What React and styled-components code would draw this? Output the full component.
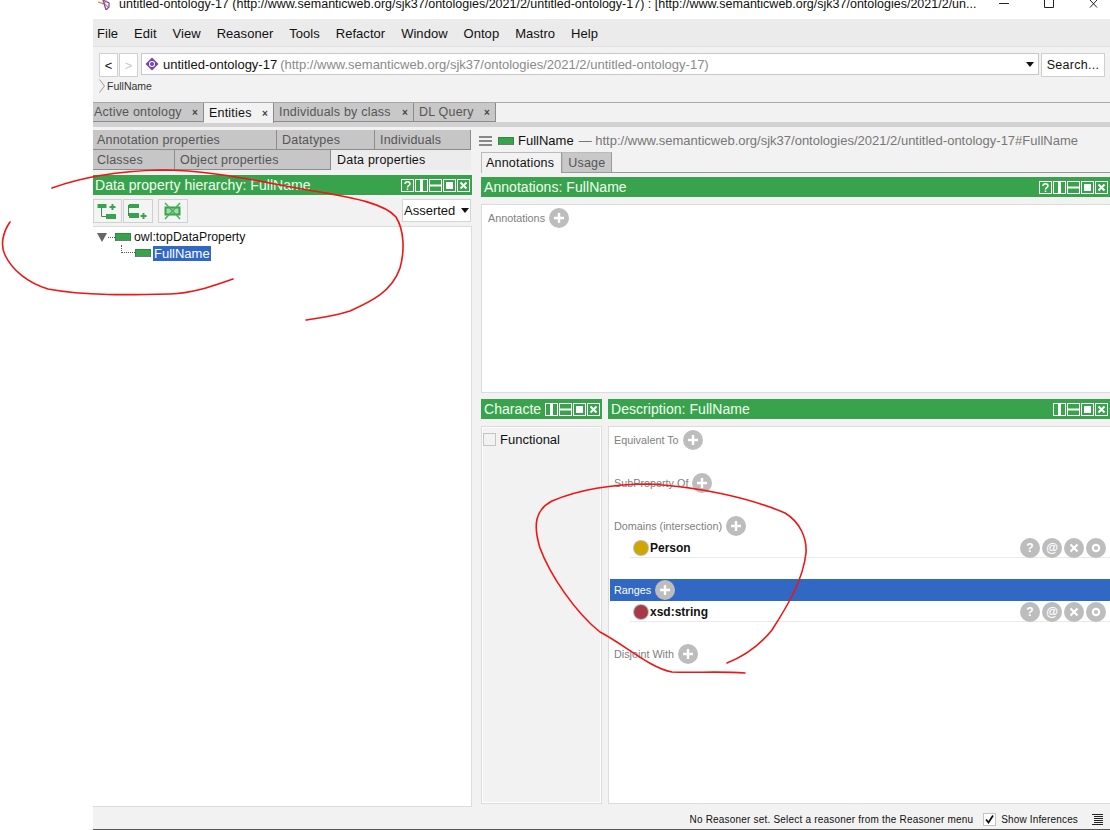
import React from 'react';
import styled, { createGlobalStyle } from 'styled-components';

const GlobalStyle = createGlobalStyle`
  html, body { margin: 0; padding: 0; background: #fff; }
  * { box-sizing: border-box; }
`;

const GREEN = '#38a34c';
const BLUE = '#3068c4';

const Page = styled.div`
  position: relative;
  width: 1110px;
  height: 830px;
  overflow: hidden;
  background: #fff;
  padding-left: 93px;
  font-family: "Liberation Sans", Arial, sans-serif;
  color: #111;
`;

const Frame = styled.div`
  display: flex;
  flex-direction: column;
  height: 830px;
`;

const TitleBar = styled.div`
  height: 19px;
  flex: none;
  display: flex;
  align-items: flex-start;
  padding-left: 5px;
  background: #fff;
  font-size: 12.5px;
  line-height: 8px;
`;

const TitleText = styled.span`
  margin-left: 8px;
  width: 858px;
  white-space: nowrap;
  overflow: visible;
`;

const WindowButtons = styled.div`
  display: flex;
  margin-left: 21px;
  gap: 33px;
`;

const MenuBar = styled.div`
  height: 28px;
  flex: none;
  display: flex;
  align-items: center;
  gap: 16px;
  padding: 1px 0 0 4px;
  background: #ebebeb;
  border-bottom: 1px solid #e0e0e0;
  font-size: 13px;
  letter-spacing: 0.03px;
`;

const Toolbar = styled.div`
  height: 55px;
  flex: none;
  padding: 6px 5px 0 6px;
  background: #f2f2f2;
`;

const NavRow = styled.div`
  display: flex;
  align-items: flex-start;
`;

const NavButton = styled.div`
  width: 19px;
  height: 24px;
  margin-right: 1px;
  display: flex;
  align-items: center;
  justify-content: center;
  background: #fff;
  border: 1px solid #d0d0d0;
  font-size: 13px;
  color: ${(p) => (p.$off ? '#c8c8c8' : '#111')};
`;

const Combo = styled.div`
  width: 899px;
  height: 22px;
  margin: 0 2px;
  padding: 0 4px 0 3px;
  display: flex;
  align-items: center;
  background: #fff;
  border: 1px solid #c8c8c8;
  font-size: 13px;
`;

const ComboName = styled.span`
  margin-left: 4px;
  white-space: nowrap;
`;

const ComboIri = styled.span`
  margin-left: 3px;
  color: #8a8a8a;
  white-space: nowrap;
`;

const Caret = styled.span`
  margin-left: auto;
  width: 0;
  height: 0;
  border-left: 4px solid transparent;
  border-right: 4px solid transparent;
  border-top: 5px solid #111;
`;

const SearchButton = styled.div`
  width: 64px;
  height: 24px;
  display: flex;
  align-items: center;
  justify-content: center;
  background: #fff;
  border: 1px solid #cfcfcf;
  font-size: 12.5px;
  letter-spacing: 0.3px;
`;

const Crumb = styled.div`
  display: flex;
  align-items: center;
  gap: 2px;
  height: 14px;
  margin-top: 2px;
  font-size: 10.5px;
  color: #333;
`;

const MainTabs = styled.div`
  flex: none;
  height: 25px;
  display: flex;
  align-items: flex-start;
  background: #f2f2f2;
  border-top: 1px solid #a8a8a8;
  box-shadow: inset 0 -5px 0 #d2d2d2;
`;

const MainTab = styled.div`
  height: ${(p) => (p.$on ? 20 : 19)}px;
  width: ${(p) => p.$w}px;
  flex: none;
  display: flex;
  align-items: center;
  justify-content: space-between;
  padding: 0 5px 0 ${(p) => (p.$first ? 1 : 5)}px;
  background: ${(p) => (p.$on ? '#f2f2f2' : '#c8c8c8')};
  border-right: 1px solid #8c8c8c;
  border-bottom: ${(p) => (p.$on ? 'none' : '1px solid #8c8c8c')};
  font-size: 12.5px;
  letter-spacing: 0.2px;
  color: ${(p) => (p.$on ? '#111' : '#555')};
`;

const TabClose = styled.span`
  font-size: 10px;
  font-weight: bold;
  color: #444;
`;

const Workspace = styled.div`
  flex: 1;
  min-height: 0;
  display: grid;
  grid-template-columns: 379px 1fr;
  column-gap: 9px;
  background: #f2f2f2;
`;

const LeftColumn = styled.div`
  display: flex;
  flex-direction: column;
  padding-top: 3px;
  min-height: 0;
`;

const SubTabRow = styled.div`
  display: flex;
  height: ${(p) => p.$h}px;
  flex: none;
  margin-bottom: ${(p) => p.$after || 0}px;
`;

const SubTab = styled.div`
  width: ${(p) => p.$w}px;
  flex: none;
  display: flex;
  align-items: center;
  padding-left: ${(p) => (p.$on ? 6 : p.$first ? 4 : 5)}px;
  background: ${(p) => (p.$on ? '#ececec' : '#c6c6c6')};
  border-right: ${(p) => (p.$on ? 'none' : '1px solid #8c8c8c')};
  border-bottom: ${(p) => (p.$on ? 'none' : '1px solid #8c8c8c')};
  font-size: 12.5px;
  letter-spacing: 0.2px;
  color: ${(p) => (p.$on ? '#111' : '#555')};
`;

const GreenBar = styled.div`
  flex: none;
  height: 20px;
  display: flex;
  align-items: center;
  justify-content: space-between;
  padding: 0 2px 0 ${(p) => (p.$tight ? 2 : 3)}px;
  background: ${GREEN};
  color: #f2fff2;
  font-size: 14px;
  letter-spacing: 0.05px;
  white-space: nowrap;
  overflow: hidden;
`;

const ViewIcons = styled.div`
  display: flex;
  flex: none;
  gap: 1px;
`;

const HierarchyTools = styled.div`
  flex: none;
  height: 31px;
  display: flex;
  align-items: flex-start;
  padding-top: 4px;
`;

const ToolButton = styled.div`
  width: ${(p) => p.$w}px;
  height: 24px;
  margin-right: ${(p) => p.$gap}px;
  display: flex;
  align-items: center;
  justify-content: center;
  background: #f4f4f4;
  border: 1px solid #d0d0d0;
`;

const AssertedSelect = styled.div`
  margin-left: auto;
  width: 69px;
  height: 23px;
  margin-right: 1px;
  display: flex;
  align-items: center;
  justify-content: space-between;
  padding: 0 1px 0 1px;
  background: #fff;
  border: 1px solid #d4d4d4;
  font-size: 13px;
`;

const TreeBox = styled.div`
  width: 379px;
  height: 581px;
  flex: none;
  padding: 2px 0 0 4px;
  background: #fff;
  border-top: 1px solid #dcdcdc;
  border-right: 1px solid #dcdcdc;
  border-bottom: 1px solid #dcdcdc;
  font-size: 12.3px;
`;

const TreeRow = styled.div`
  height: 16px;
  display: flex;
  align-items: center;
  padding-left: ${(p) => p.$indent}px;
`;

const Triangle = styled.span`
  width: 0;
  height: 0;
  margin-right: 1px;
  border-left: 5px solid transparent;
  border-right: 5px solid transparent;
  border-top: 9px solid #666;
`;

const DotsH = styled.span`
  width: ${(p) => p.$w}px;
  border-top: 1px dotted #555;
`;

const DotsL = styled.span`
  width: 14px;
  height: 8px;
  margin-top: -8px;
  border-left: 1px dotted #555;
  border-bottom: 1px dotted #555;
`;

const PropertyMark = styled.span`
  display: inline-block;
  width: ${(p) => p.$w || 16}px;
  height: 8px;
  flex: none;
  margin-left: ${(p) => p.$left || 0}px;
  background: ${GREEN};
  border: 1px solid #2d8a3e;
  border-bottom-color: #777;
`;

const TreeLabel = styled.span`
  margin-left: ${(p) => (p.$on ? 2 : 3)}px;
  padding: ${(p) => (p.$on ? '0 1px' : 0)};
  font-size: ${(p) => (p.$on ? 13 : 12.3)}px;
  line-height: 15px;
  white-space: nowrap;
  background: ${(p) => (p.$on ? BLUE : 'transparent')};
  color: ${(p) => (p.$on ? '#fff' : '#111')};
`;

const RightColumn = styled.div`
  display: flex;
  flex-direction: column;
  min-width: 0;
  min-height: 0;
`;

const EntityHeader = styled.div`
  flex: none;
  height: 25px;
  padding: 5px 0 3px;
  margin-left: -2px;
  display: flex;
  align-items: center;
  font-size: 13px;
  white-space: nowrap;
`;

const EntityName = styled.span`
  margin-left: 4px;
`;

const EntityIri = styled.span`
  margin-left: 5px;
  color: #777;
`;

const InnerTabs = styled.div`
  flex: none;
  height: 21px;
  display: flex;
  border-bottom: 1px solid #999;
`;

const InnerTab = styled.div`
  height: ${(p) => (p.$on ? 21 : 20)}px;
  display: flex;
  align-items: center;
  padding: 0 ${(p) => (p.$on ? 7 : 6)}px 0 ${(p) => (p.$on ? 4 : 5)}px;
  background: ${(p) => (p.$on ? '#f2f2f2' : '#c8c8c8')};
  border: 1px solid #bbb;
  border-bottom: none;
  border-right-color: #999;
  font-size: 12.5px;
  letter-spacing: 0.2px;
  color: ${(p) => (p.$on ? '#111' : '#555')};
`;

const AnnotationsPane = styled.div`
  flex: none;
  margin-top: 4px;
`;

const AnnotationsBox = styled.div`
  height: 189px;
  margin-top: 7px;
  padding: 2px 0 0 6px;
  background: #fff;
  border: 1px solid #dcdcdc;
  border-right: none;
`;

const BottomPanes = styled.div`
  flex: none;
  margin-top: 6px;
  display: grid;
  grid-template-columns: 121px 1fr;
  column-gap: 6px;
`;

const Pane = styled.div`
  min-width: 0;
`;

const CharBox = styled.div`
  height: 378px;
  margin-top: 7px;
  padding: 5px 0 0 1px;
  background: #f2f2f2;
  border: 1px solid #dcdcdc;
  outline: 1px solid #fff;
  outline-offset: -2px;
`;

const CheckRow = styled.div`
  display: flex;
  align-items: center;
  font-size: 13px;
`;

const CheckBox = styled.span`
  width: 13px;
  height: 13px;
  margin-right: ${(p) => (p.$light ? 4 : 5)}px;
  display: flex;
  align-items: center;
  justify-content: center;
  background: ${(p) => (p.$light ? '#f2f2f2' : '#fff')};
  border: 1px solid #c4c4c4;
`;

const DescBox = styled.div`
  height: 378px;
  margin-top: 7px;
  padding: 2px 0 0 1px;
  background: #fff;
  border: 1px solid #dcdcdc;
  border-right: none;
`;

const Section = styled.div`
  margin-bottom: 21px;
`;

const SectionHead = styled.div`
  height: 22px;
  display: flex;
  align-items: center;
  padding-left: ${(p) => (p.$flush ? 0 : 4)}px;
  background: ${(p) => (p.$on ? BLUE : 'transparent')};
  color: ${(p) => (p.$on ? '#fff' : '#808080')};
  font-size: 10.8px;
`;

const HeadLabel = styled.span`
  margin-right: 4px;
  white-space: nowrap;
`;

const RoundButton = styled.span`
  width: 20px;
  height: 20px;
  flex: none;
  display: flex;
  align-items: center;
  justify-content: center;
  border-radius: 50%;
  background: #bdbdbd;
  color: #fff;
  font-size: 12px;
  font-weight: bold;
`;

const FrameRow = styled.div`
  height: 20px;
  margin: 1px 0 0 20px;
  display: flex;
  align-items: center;
  padding: 0 4px;
  border-bottom: 1px solid #eaeaea;
`;

const Ball = styled.span`
  width: 14px;
  height: 14px;
  flex: none;
  border-radius: 50%;
  background: ${(p) => p.$c};
  box-shadow: 0 0 0 1px #bbb;
`;

const FrameName = styled.span`
  margin-left: 2px;
  font-size: 12px;
  font-weight: bold;
`;

const RowActions = styled.span`
  margin-left: auto;
  display: flex;
  gap: 2px;
`;

const StatusBar = styled.div`
  flex: none;
  height: 23px;
  display: flex;
  align-items: center;
  justify-content: flex-end;
  padding: 2px 7px 0 0;
  background: #f2f2f2;
  border-bottom: 1px solid #555;
  font-size: 10px;
  letter-spacing: 0.2px;
`;

const ShowInferences = styled.span`
  margin-left: 10px;
  display: flex;
  align-items: center;
  margin-right: 14px;
  letter-spacing: 0.15px;
`;

const Scribble = styled.svg`
  position: absolute;
  left: 0;
  top: 0;
  pointer-events: none;
`;

const ViewIcon = ({ kind }) => (
  <svg width="13" height="13" viewBox="0 0 13 13" fill="none" stroke="#fff" strokeWidth="1">
    <rect x="0.5" y="0.5" width="12" height="12" />
    {kind === 'v' && <path d="M6.5 1v11" strokeWidth="3" />}
    {kind === 'h' && <path d="M1 6.5h11" strokeWidth="2" />}
    {kind === 'max' && <rect x="3" y="3" width="7" height="7" fill="#fff" stroke="none" />}
    {kind === 'x' && <path d="M3.5 3.5l6 6M9.5 3.5l-6 6" strokeWidth="2" />}
    {kind === 'q' && <path d="M4 5c0-3 5-3 5 0 0 1.500-2.500 1.500-2.500 3.500M6.500 9.500v1.500" strokeWidth="1.500" />}
  </svg>
);

const ViewButtons = ({ help }) => (
  <ViewIcons>
    {help && <ViewIcon kind="q" />}
    <ViewIcon kind="v" />
    <ViewIcon kind="h" />
    <ViewIcon kind="max" />
    <ViewIcon kind="x" />
  </ViewIcons>
);

const PlusIcon = () => (
  <svg width="12" height="12" viewBox="0 0 12 12">
    <path d="M6 1v10M1 6h10" stroke="#fff" strokeWidth="2.400" />
  </svg>
);

const AddButton = () => (
  <RoundButton>
    <PlusIcon />
  </RoundButton>
);

const RowButtons = () => (
  <RowActions>
    <RoundButton>?</RoundButton>
    <RoundButton>@</RoundButton>
    <RoundButton>
      <svg width="10" height="10" viewBox="0 0 10 10">
        <path d="M1.500 1.500l7 7M8.500 1.500l-7 7" stroke="#fff" strokeWidth="2.200" />
      </svg>
    </RoundButton>
    <RoundButton>
      <svg width="10" height="10" viewBox="0 0 10 10">
        <circle cx="5" cy="5" r="3.200" fill="none" stroke="#fff" strokeWidth="2.200" />
      </svg>
    </RoundButton>
  </RowActions>
);

const ProtegeLogo = () => (
  <svg width="13" height="10" viewBox="0 0 13 10" fill="none" strokeWidth="1.300">
    <path d="M0 2l7 2 3 3" stroke="#d08a40" />
    <path d="M5 0l6 3 0 4-3 3z" stroke="#7a4fa0" />
    <path d="M4 4l5-3" stroke="#b06a9a" />
  </svg>
);

const Ontology = () => (
  <svg width="14" height="14" viewBox="0 0 14 14">
    <path d="M7 0.500l6.500 6.500-6.500 6.500-6.500-6.500z" fill="#7245a8" />
    <circle cx="7" cy="7" r="3" fill="#fff" />
    <circle cx="7" cy="7" r="2" fill="#7245a8" />
  </svg>
);

const AddSubIcon = () => (
  <svg width="21" height="17" viewBox="0 0 21 17" fill="none">
    <rect x="0.500" y="1" width="9" height="4" fill={GREEN} />
    <rect x="9" y="11" width="10" height="5" fill={GREEN} />
    <path d="M4.500 5v8.500h5" stroke="#3f8a50" />
    <path d="M15.500 1v6M12.500 4h6" stroke={GREEN} strokeWidth="2" />
  </svg>
);

const AddSiblingIcon = () => (
  <svg width="20" height="17" viewBox="0 0 20 17" fill="none">
    <rect x="1" y="1" width="10" height="4" fill={GREEN} />
    <rect x="1" y="10" width="10" height="5" fill={GREEN} />
    <path d="M0.500 2v11" stroke="#3f8a50" />
    <path d="M15.500 10v6M12.500 13h6" stroke={GREEN} strokeWidth="2" />
  </svg>
);

const DeleteIcon = () => (
  <svg width="20" height="18" viewBox="0 0 20 18" fill="none">
    <rect x="2.500" y="5.500" width="14" height="7" stroke={GREEN} strokeWidth="2" fill="#a8d8b0" />
    <path d="M2 1l15 16M17 1l-15 16" stroke="#4cae5e" strokeWidth="1.500" />
  </svg>
);

const MainTabItem = ({ w, on, first, children }) => (
  <MainTab $w={w} $on={on} $first={first}>
    <span>{children}</span>
    <TabClose>×</TabClose>
  </MainTab>
);

const FrameItem = ({ color, name }) => (
  <FrameRow>
    <Ball $c={color} />
    <FrameName>{name}</FrameName>
    <RowButtons />
  </FrameRow>
);

const menus = ['File', 'Edit', 'View', 'Reasoner', 'Tools', 'Refactor', 'Window', 'Ontop', 'Mastro', 'Help'];

export default function App() {
  return (
    <Page>
      <GlobalStyle />
      <Frame>
        <TitleBar>
          <ProtegeLogo />
          <TitleText>
            untitled-ontology-17 (http://www.semanticweb.org/sjk37/ontologies/2021/2/untitled-ontology-17)  : [http://www.semanticweb.org/sjk37/ontologies/2021/2/un...
          </TitleText>
          <WindowButtons>
            <svg width="12" height="8" viewBox="0 0 12 8"><path d="M1 3.500h10" stroke="#222" /></svg>
            <svg width="12" height="8" viewBox="0 0 12 8"><path d="M1.500 0v7.500h9V0" stroke="#222" fill="none" /></svg>
            <svg width="12" height="8" viewBox="0 0 12 8"><path d="M2 0l7 7.500M9 0l-7 7.500" stroke="#222" fill="none" /></svg>
          </WindowButtons>
        </TitleBar>

        <MenuBar>
          {menus.map((m) => <span key={m}>{m}</span>)}
        </MenuBar>

        <Toolbar>
          <NavRow>
            <NavButton>&lt;</NavButton>
            <NavButton $off>&gt;</NavButton>
            <Combo>
              <Ontology />
              <ComboName>untitled-ontology-17</ComboName>
              <ComboIri>(http://www.semanticweb.org/sjk37/ontologies/2021/2/untitled-ontology-17)</ComboIri>
              <Caret />
            </Combo>
            <SearchButton>Search...</SearchButton>
          </NavRow>
          <Crumb>
            <svg width="6" height="14" viewBox="0 0 6 14" fill="none">
              <path d="M0.500 0.500l5 6.500-5 6.500" stroke="#999" />
            </svg>
            FullName
          </Crumb>
        </Toolbar>

        <MainTabs>
          <MainTabItem w={111} first>Active ontology</MainTabItem>
          <MainTabItem w={70} on>Entities</MainTabItem>
          <MainTabItem w={140}>Individuals by class</MainTabItem>
          <MainTabItem w={82}>DL Query</MainTabItem>
        </MainTabs>

        <Workspace>
          <LeftColumn>
            <SubTabRow $h={20}>
              <SubTab $w={184} $first>Annotation properties</SubTab>
              <SubTab $w={98}>Datatypes</SubTab>
              <SubTab $w={96}>Individuals</SubTab>
            </SubTabRow>
            <SubTabRow $h={20} $after={5}>
              <SubTab $w={82} $first>Classes</SubTab>
              <SubTab $w={156}>Object properties</SubTab>
              <SubTab $w={140} $on>Data properties</SubTab>
            </SubTabRow>
            <GreenBar $tight>
              <span>Data property hierarchy: FullName</span>
              <ViewButtons help />
            </GreenBar>
            <HierarchyTools>
              <ToolButton $w={29} $gap={1}><AddSubIcon /></ToolButton>
              <ToolButton $w={30} $gap={5}><AddSiblingIcon /></ToolButton>
              <ToolButton $w={30} $gap={0}><DeleteIcon /></ToolButton>
              <AssertedSelect>
                Asserted
                <Caret />
              </AssertedSelect>
            </HierarchyTools>
            <TreeBox>
              <TreeRow $indent={0}>
                <Triangle />
                <DotsH $w={7} />
                <PropertyMark />
                <TreeLabel>owl:topDataProperty</TreeLabel>
              </TreeRow>
              <TreeRow $indent={24}>
                <DotsL />
                <PropertyMark />
                <TreeLabel $on>FullName</TreeLabel>
              </TreeRow>
            </TreeBox>
          </LeftColumn>

          <RightColumn>
            <EntityHeader>
              <svg width="15" height="10" viewBox="0 0 15 10">
                <path d="M0 1h13M0 5h13M0 9h13" stroke="#666" strokeWidth="1.500" />
              </svg>
              <PropertyMark $left={4} />
              <EntityName>FullName</EntityName>
              <EntityIri>— http://www.semanticweb.org/sjk37/ontologies/2021/2/untitled-ontology-17#FullName</EntityIri>
            </EntityHeader>
            <InnerTabs>
              <InnerTab $on>Annotations</InnerTab>
              <InnerTab>Usage</InnerTab>
            </InnerTabs>
            <AnnotationsPane>
              <GreenBar>
                <span>Annotations: FullName</span>
                <ViewButtons help />
              </GreenBar>
              <AnnotationsBox>
                <SectionHead $flush>
                  <HeadLabel>Annotations</HeadLabel>
                  <AddButton />
                </SectionHead>
              </AnnotationsBox>
            </AnnotationsPane>
            <BottomPanes>
              <Pane>
                <GreenBar>
                  <span>Characte</span>
                  <ViewButtons />
                </GreenBar>
                <CharBox>
                  <CheckRow>
                    <CheckBox $light />
                    Functional
                  </CheckRow>
                </CharBox>
              </Pane>
              <Pane>
                <GreenBar>
                  <span>Description: FullName</span>
                  <ViewButtons />
                </GreenBar>
                <DescBox>
                  <Section>
                    <SectionHead><HeadLabel>Equivalent To</HeadLabel><AddButton /></SectionHead>
                  </Section>
                  <Section>
                    <SectionHead><HeadLabel>SubProperty Of</HeadLabel><AddButton /></SectionHead>
                  </Section>
                  <Section>
                    <SectionHead><HeadLabel>Domains (intersection)</HeadLabel><AddButton /></SectionHead>
                    <FrameItem color="#cfa500" name="Person" />
                  </Section>
                  <Section>
                    <SectionHead $on><HeadLabel>Ranges</HeadLabel><AddButton /></SectionHead>
                    <FrameItem color="#a83a48" name="xsd:string" />
                  </Section>
                  <Section>
                    <SectionHead><HeadLabel>Disjoint With</HeadLabel><AddButton /></SectionHead>
                  </Section>
                </DescBox>
              </Pane>
            </BottomPanes>
          </RightColumn>
        </Workspace>

        <StatusBar>
          <span>No Reasoner set. Select a reasoner from the Reasoner menu</span>
          <ShowInferences>
            <CheckBox>
              <svg width="9" height="9" viewBox="0 0 9 9" fill="none">
                <path d="M1 4.500l2.500 3 4.500-7" stroke="#111" strokeWidth="1.800" />
              </svg>
            </CheckBox>
            Show Inferences
          </ShowInferences>
          <svg width="11" height="11" viewBox="0 0 11 11">
            <path d="M0 .5h11M2 2.500h9M2 4.500h9M2 6.500h9M2 8.500h9M0 10.500h11" stroke="#222" />
          </svg>
        </StatusBar>
      </Frame>

      <Scribble width="1110" height="830" viewBox="0 0 1110 830" fill="none" stroke="#f01414" strokeWidth="1.600" strokeLinecap="round">
        <path d="M52 188C85 176 120 171 160 170C215 170 265 183 320 192C355 198 385 204 396 217C404 230 405 250 400 268C392 292 370 302 350 311C335 316 320 318 306 320" />
        <path d="M10 222C3 232 0 245 5 255C12 270 28 283 48 289C85 296 130 295 170 294C195 293 215 285 233 279" />
        <path d="M745 673C720 671 695 673 672 672C650 668 625 645 600 632C575 612 550 575 540 548C533 525 535 510 552 501C585 487 620 484 650 484C700 487 750 498 785 513C800 522 807 538 806 553C803 580 788 605 772 630C760 645 745 656 727 663" />
      </Scribble>
    </Page>
  );
}
